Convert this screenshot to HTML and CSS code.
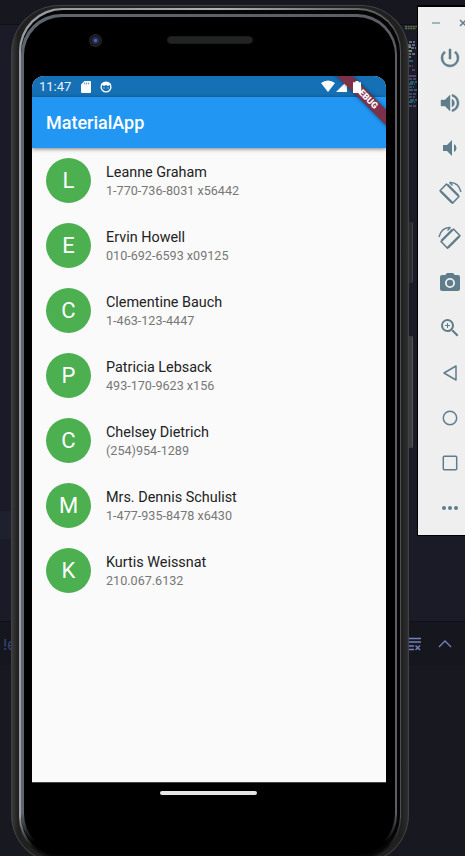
FILE: index.html
```html
<!DOCTYPE html>
<html lang="en">
<head>
<meta charset="utf-8">
<title>MaterialApp</title>
<link rel="stylesheet" href="styles.css">
</head>
<body>
<div class="editor">
  <div class="editor-top"></div>
  <div class="editor-code">
    <div class="active-line"></div>
    <svg class="minimap" width="12" height="85" viewBox="0 0 12 85">
      <path d="M0 1.500h12M0 3.500h11" stroke="#56703f" stroke-width="1.500" stroke-dasharray="2 .6"/>
      <path d="M4 17h6M3 20h8M6 23h5M3 29h8M3 32h4" stroke="#666887" stroke-width="2" stroke-dasharray="3 1"/>
      <path d="M3 26h4M3 22h3" stroke="#78965a" stroke-width="2"/>
      <path d="M4 36h4M5 57h7M4 59h6M4 65h8M5 75h7M4 77h6" stroke="#24728a" stroke-width="1.500" stroke-dasharray="4 1"/>
      <path d="M3 41h5M7 45h4M4 54h7M4 62h5M4 69h7M4 72h6M4 81h8" stroke="#50537a" stroke-width="1.500" stroke-dasharray="3 1"/>
      <path d="M4 51h7" stroke="#68488f" stroke-width="1.500"/>
    </svg>
  </div>
  <div class="terminal-bar">
    <span class="terminal-text">!e</span>
    <svg width="58" height="20" viewBox="0 0 58 20" fill="none" stroke="#7381bd">
      <path d="M0 4.500h14M0 8h14M0 12h7M0 15.500h7" stroke-width="1.300"/>
      <path d="M8.500 11.500l4.500 4.500M13 11.500l-4.500 4.500" stroke-width="1.400"/>
      <path d="M32 13l6-6 6 6" stroke-width="1.300"/>
    </svg>
  </div>
  <div class="editor-bottom"></div>
</div>

<div class="device">
  <i class="side-button power"></i><i class="side-button volume"></i>
  <div class="rim"><div class="shell"><div class="edge"><div class="groove"><div class="glass-edge"><div class="glass">
    <div class="hardware"><span class="camera"></span><span class="speaker"></span></div>
    <main class="screen">
      <div class="status">
        <span class="clock">11:47</span>
        <svg class="sd" width="10" height="12" viewBox="0 0 10 12"><path fill="#fff" d="M3.500 0H9q1 0 1 1v10q0 1-1 1H1q-1 0-1-1V3.500z"/><path d="M3.700 1.500v2M5.700 1.500v2M7.700 1.500v2" stroke="#1670b5" stroke-width=".7"/></svg>
        <svg class="face" width="12" height="12" viewBox="0 0 12 12"><circle cx="6" cy="6" r="4.900" fill="none" stroke="#fff" stroke-width="1.300"/><path fill="#fff" d="M1 5V3l3-2h4l3 2v2L9.500 4 8 5 6 4 4 5 2.500 4z"/><path d="M3.500 7h1M7.500 7h1" stroke="#fff"/></svg>
        <span class="fill"></span>
        <svg class="signals" width="40" height="13" viewBox="0 0 40 13" fill="#fff"><path d="M0 3Q7-2 14 3L7 12zM15 12h11V1z"/></svg>
      </div>
      <header class="appbar"><h1>MaterialApp</h1></header>
      <ul class="contacts">
        <li><span class="avatar">L</span><div><b>Leanne Graham</b><small>1-770-736-8031 x56442</small></div></li>
        <li><span class="avatar">E</span><div><b>Ervin Howell</b><small>010-692-6593 x09125</small></div></li>
        <li><span class="avatar">C</span><div><b>Clementine Bauch</b><small>1-463-123-4447</small></div></li>
        <li><span class="avatar">P</span><div><b>Patricia Lebsack</b><small>493-170-9623 x156</small></div></li>
        <li><span class="avatar">C</span><div><b>Chelsey Dietrich</b><small>(254)954-1289</small></div></li>
        <li><span class="avatar">M</span><div><b>Mrs. Dennis Schulist</b><small>1-477-935-8478 x6430</small></div></li>
        <li><span class="avatar">K</span><div><b>Kurtis Weissnat</b><small>210.067.6132</small></div></li>
      </ul>
      <div class="debug"><span>DEBUG</span></div>
      <svg class="battery" width="8" height="12" viewBox="0 0 8 12"><path fill="#fff" d="M2.500 0h3v1.200H8V12H0V1.200h2.500z"/></svg>
    </main>
    <div class="home"></div>
  </div></div></div></div></div></div>
</div>

<aside class="tools">
  <div class="window-buttons">
    <svg width="34" height="10" viewBox="0 0 34 10" fill="none"><path d="M0 5h8" stroke="#a3b3ba" stroke-width="2"/><path d="M28 2l6 6M34 2l-6 6" stroke="#607d8b" stroke-width="1.500"/></svg>
  </div>
  <svg viewBox="0 0 24 24"><path d="M13 3h-2v10h2V3zm4.830 2.170-1.420 1.420A6.920 6.920 0 0 1 19 12c0 3.870-3.130 7-7 7A6.995 6.995 0 0 1 7.580 6.580L6.170 5.170A8.932 8.932 0 0 0 3 12a9 9 0 0 0 18 0c0-2.740-1.230-5.180-3.170-6.830z" stroke="#607d8b" stroke-width=".5"/></svg>
  <svg viewBox="0 0 24 24"><path d="M3 9v6h4l5 5V4L7 9H3zm13.500 3A4.500 4.500 0 0 0 14 7.970v8.050c1.480-.73 2.500-2.250 2.500-4.020zM14 3.230v2.060c2.890.86 5 3.540 5 6.710s-2.110 5.850-5 6.710v2.060c4.010-.91 7-4.490 7-8.770s-2.990-7.860-7-8.770z" stroke="#607d8b" stroke-width=".4"/></svg>
  <svg viewBox="0 0 24 24"><path d="M18.500 12A4.500 4.500 0 0 0 16 7.970v8.050c1.480-.73 2.500-2.250 2.500-4.020zM5 9v6h4l5 5V4L9 9H5z"/></svg>
  <svg viewBox="0 0 24 24"><g fill="none" stroke="#607d8b"><path d="M8.500 3 21 15.500l-6.500 6.700L2 9.700z" stroke-width="1.600" stroke-linejoin="round"/><path d="M3 10.500l11 11M9.500 3.800l11 11" stroke-width="2.300"/><path d="M11.500 1.500Q20.500 1 23 11M11.500 1.500l3 3" stroke-width="1.400"/></g></svg>
  <svg viewBox="0 0 24 24"><g fill="none" stroke="#607d8b"><path d="M15.500 3 3 15.500l6.500 6.700L22 9.700z" stroke-width="1.600" stroke-linejoin="round"/><path d="M21 10.500l-11 11M14.500 3.800l-11 11" stroke-width="2.300"/><path d="M12.500 1.500Q3.500 1 1 11M12.500 1.500l-3 3" stroke-width="1.400"/></g></svg>
  <svg viewBox="0 0 24 24"><circle cx="12" cy="12" r="3.200"/><path d="M9 2 7.170 4H4c-1.100 0-2 .9-2 2v12c0 1.100.9 2 2 2h16c1.100 0 2-.9 2-2V6c0-1.100-.9-2-2-2h-3.170L15 2H9zm3 15a5 5 0 1 1 0-10 5 5 0 0 1 0 10z"/></svg>
  <svg viewBox="0 0 24 24"><path d="M15.500 14h-.79l-.28-.27A6.471 6.471 0 0 0 16 9.500 6.500 6.500 0 1 0 9.500 16c1.610 0 3.090-.59 4.230-1.570l.27.28v.79l5 4.990L20.490 19l-4.990-5zm-6 0a4.500 4.500 0 1 1 0-9 4.500 4.500 0 0 1 0 9zM12 10h-2v2H9v-2H7V9h2V7h1v2h2v1z"/></svg>
  <svg viewBox="0 0 24 24"><path fill="none" stroke="#607d8b" stroke-width="1.500" stroke-linejoin="round" d="M18 5v14L6 12z"/></svg>
  <svg viewBox="0 0 24 24"><circle cx="12" cy="12" r="6.700" fill="none" stroke="#607d8b" stroke-width="1.500"/></svg>
  <svg viewBox="0 0 24 24"><rect x="5.300" y="5.300" width="13.400" height="13.400" rx="1" fill="none" stroke="#607d8b" stroke-width="1.500"/></svg>
  <svg viewBox="0 0 24 24"><circle cx="6" cy="12" r="2"/><circle cx="12" cy="12" r="2"/><circle cx="18" cy="12" r="2"/></svg>
</aside>
</body>
</html>
```

FILE: styles.css
```css
* { box-sizing: border-box; }
body {
  margin: 0;
  position: relative;
  width: 465px;
  height: 856px;
  overflow: hidden;
  font-family: Roboto, sans-serif;
}

/* Editor behind the emulator */
.editor { height: 856px; display: flex; flex-direction: column; background: #1b1b27; }
.editor-top { height: 25px; background: #171720; border-bottom: 1px solid #0f1017; }
.editor-code { height: 597px; border-bottom: 1px solid #101118; position: relative; }
.active-line { margin-top: 486px; width: 12px; height: 28px; background: #1e202d; }
.minimap { position: absolute; left: 405px; top: 0; }
.terminal-bar {
  height: 44px; background: #16171e; display: flex; align-items: center;
  justify-content: space-between; padding-left: 3px;
}
.terminal-text { color: #31487d; font: 15px Inter, sans-serif; }
.editor-bottom { flex: 1; background: #171820; }

/* Phone */
.device { position: absolute; left: 11px; top: 5px; width: 398px; height: 858px; }
.rim { height: 100%; padding: 1px; background: #414244; border-radius: 48px; }
.shell { height: 100%; padding: 2px 7px 2px 7px; background: linear-gradient(90deg, #3a3a3a, #202020 6px, #202020 390px, #303030); border-radius: 47px; }
.edge {
  height: 100%; padding: 2px 1px 2px 2px; border-radius: 43px;
  background:
    linear-gradient(transparent 95%, #111 98.5%),
    linear-gradient(90deg, #9a9da0, #9a9da0 100px, #b0b2b4 200px, #505153);
}
.groove { height: 100%; padding: 4px 3px 3px 0; background: #050505; border-radius: 42px; }
.glass-edge {
  height: 100%; padding: 3px 2px 3px 3px; border-radius: 40px;
  background:
    linear-gradient(transparent 95%, #000 98.5%),
    linear-gradient(90deg, #5f656f, #5c5d65);
}
.glass { height: 100%; background: #000; border-radius: 38px; padding: 19px 9px 0 8px; display: flex; flex-direction: column; }
.hardware { height: 40px; display: flex; align-items: flex-start; padding-left: 56.500px; flex: none; }
.camera {
  width: 13px; height: 13px; margin-top: -2.500px; border-radius: 50%;
  background: radial-gradient(circle, #53639b 0 1px, #26305c 2px 3px, #14151e 4px, #242427 6px);
}
.speaker {
  width: 86px; height: 8px; margin-left: 65.500px; border-radius: 4px;
  background: #222423; border: 1px solid #191a1a;
}
.side-button { position: absolute; right: -4px; width: 4px; background: #2b2c30; border-right: 1px solid #404146; border-radius: 0 2px 2px 0; }
.power { top: 217px; height: 61px; }
.volume { top: 331px; height: 112px; background: #3b3c40; border-right-color: #55565b; }

.screen {
  position: relative; width: 354px; height: 707px; background: #fafafa; flex: none;
  border-radius: 12px 12px 0 0; overflow: hidden; border-bottom: 1px solid #444;
}
.status { height: 21px; display: flex; align-items: center; padding: 0 25px 0 7px; background: #1670b5; color: #fff; }
.clock { font-size: 13px; width: 42px; line-height: 21px; color: #e8f1f8; }
.face { margin-left: 9px; }
.fill { flex: 1; }
.appbar {
  position: relative; height: 51px; display: flex; align-items: center; padding-left: 14px;
  background: #2196f3; color: #fff; box-shadow: 0 1px 4px rgba(0,0,0,.5);
}
h1 { margin: 1px 0 0; font-size: 18px; font-weight: 500; line-height: 24px; }
.contacts { list-style: none; margin: -.5px 0 0; padding: 0 14px; }
li { height: 65px; display: flex; align-items: center; gap: 15px; }
.avatar {
  width: 45px; height: 45px; border-radius: 50%; background: #4caf50; color: #fff;
  font-size: 22px; display: flex; align-items: center; justify-content: center;
}
b { display: block; margin-top: 3px; font-size: 14.400px; font-weight: 400; line-height: 19px; color: #222; }
small { display: block; font-size: 12.600px; line-height: 18px; color: #777; }
.debug {
  position: absolute; right: -35.500px; top: 15.500px; width: 112px; height: 11px;
  background: #7d304a; color: #fff; transform: rotate(45deg);
  box-shadow: 0 0 4px rgba(0,0,0,.5); text-align: center;
  font-size: 9px; font-weight: 900; line-height: 11px;
}
.battery { position: absolute; left: 321px; top: 5px; }
.home { width: 97px; height: 4px; margin: 8px 0 0 128px; background: #e6e6e6; border-radius: 2px; flex: none; }

/* Emulator toolbar */
.tools {
  position: absolute; left: 417px; top: 5px; width: 66px; height: 531px;
  background: #efefef; border: 1px solid #000; border-top-width: 2px;
  display: flex; flex-direction: column; align-items: center; fill: #607d8b;
}
.window-buttons { height: 28px; align-self: stretch; padding: 11px 0 0 14px; flex: none; }
.window-buttons svg { display: block; }
.tools > svg { width: 24px; height: 24px; margin: 10.500px 0; flex: none; }
```
